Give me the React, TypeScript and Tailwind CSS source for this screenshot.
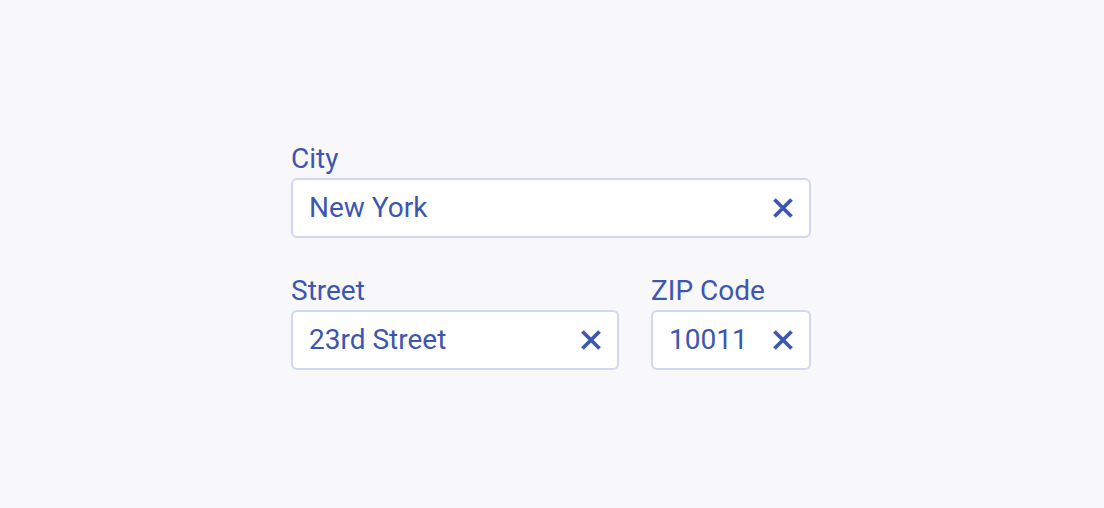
interface FieldProps {
  label: string;
  value: string;
  className?: string;
}

function ClearIcon() {
  return (
    <svg viewBox="0 0 22 22" className="h-[22px] w-[22px] shrink-0 text-[#3d56b0]" fill="none">
      <path d="M2.5 2.5L19.5 19.5M19.5 2.5L2.5 19.5" stroke="currentColor" strokeWidth={3.8} />
    </svg>
  );
}

function Field({ label, value, className }: FieldProps) {
  return (
    <div className={`flex flex-col ${className ?? ''}`}>
      <label className="mb-[3px] text-[28px] leading-[32px] text-[#3d56b0]">{label}</label>
      <div className="flex h-[60px] items-center justify-between rounded-[6px] border-2 border-[#cfd8ee] bg-white pl-[16px] pr-[15px]">
        <span className="text-[28px] leading-none text-[#3d56b0]">{value}</span>
        <ClearIcon />
      </div>
    </div>
  );
}

export default function App() {
  return (
    <div
      className="flex h-[508px] w-full justify-center bg-[#f8f8fb] pt-[143px] pr-[2px]"
      style={{ fontFamily: 'Roboto, "Noto Sans", sans-serif' }}
    >
      <div className="flex w-[520px] flex-col gap-[37px]">
        <Field label="City" value="New York" />
        <div className="flex gap-8">
          <Field label="Street" value="23rd Street" className="w-[328px]" />
          <Field label="ZIP Code" value="10011" className="w-[160px]" />
        </div>
      </div>
    </div>
  );
}
